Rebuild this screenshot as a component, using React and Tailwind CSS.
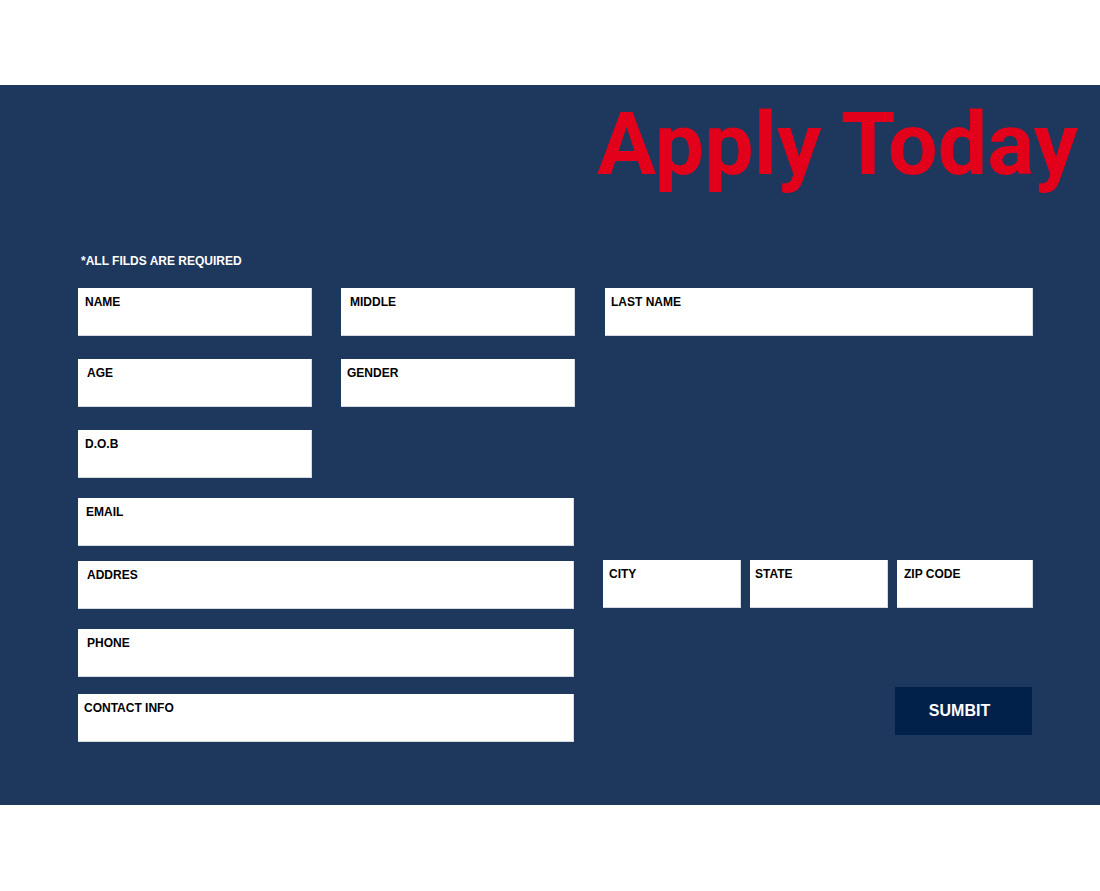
import React from 'react';

const Field = ({ label, className = '', pad = 'pl-[7px]' }) => (
  <div className={`h-[48px] bg-white border-r border-b border-[#d5dae3] ${className}`}>
    <div className={`${pad} pt-[6px] text-[12px] leading-[16px] font-bold text-black`}>{label}</div>
  </div>
);

const App = () => {
  return (
    <div className="w-[1100px] h-[891px] bg-white" style={{ fontFamily: '"Liberation Sans", Arial, sans-serif' }}>
      <div className="h-[85px]" />
      <div className="bg-[#1e375c] pl-[78px] pb-[63px]">
        <div className="flex justify-end pr-[22px] pt-[14px]">
          <h1
            className="text-[88px] leading-[89px] font-bold text-[#e2001a]"
            style={{ fontFamily: 'Roboto, "Liberation Sans", sans-serif' }}
          >
            Apply Today
          </h1>
        </div>

        <p className="mt-[65px] pl-[3px] text-[12px] leading-[16px] font-bold text-white">*ALL FILDS ARE REQUIRED</p>

        <div className="mt-[19px] flex">
          <Field label="NAME" className="w-[234px]" />
          <Field label="MIDDLE" className="w-[234px] ml-[29px]" pad="pl-[9px]" />
          <Field label="LAST NAME" className="w-[428px] ml-[30px]" pad="pl-[6px]" />
        </div>

        <div className="mt-[23px] flex">
          <Field label="AGE" className="w-[234px]" pad="pl-[9px]" />
          <Field label="GENDER" className="w-[234px] ml-[29px]" pad="pl-[6px]" />
        </div>

        <div className="mt-[23px] flex">
          <Field label="D.O.B" className="w-[234px]" />
        </div>

        <div className="mt-[20px] flex">
          <Field label="EMAIL" className="w-[496px]" pad="pl-[8px]" />
        </div>

        <div className="mt-[14px] flex items-start">
          <Field label="ADDRES" className="w-[496px] mt-[1px]" pad="pl-[9px]" />
          <div className="ml-[29px] flex gap-[9px]">
            <Field label="CITY" className="w-[138px]" pad="pl-[6px]" />
            <Field label="STATE" className="w-[138px]" pad="pl-[5px]" />
            <Field label="ZIP CODE" className="w-[136px]" pad="pl-[7px]" />
          </div>
        </div>

        <div className="mt-[20px] flex">
          <Field label="PHONE" className="w-[496px]" pad="pl-[9px]" />
        </div>

        <div className="mt-[10px] flex items-start">
          <Field label="CONTACT INFO" className="w-[496px] mt-[7px]" pad="pl-[6px]" />
          <button className="ml-[321px] w-[137px] h-[48px] pr-[8px] bg-[#02214a] text-white text-[16px] font-bold">
            SUMBIT
          </button>
        </div>
      </div>
    </div>
  );
};

export default App;
